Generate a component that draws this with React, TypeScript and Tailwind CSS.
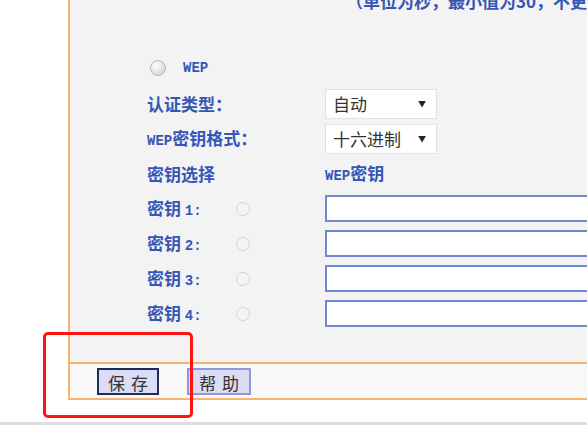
import React from "react";

const cjk = "font-['SimSun','Noto_Sans_CJK_SC',sans-serif]";

const Radio: React.FC<{ checked?: boolean; big?: boolean }> = ({ checked, big }) => (
  <span
    className={`inline-block rounded-full border ${
      big
        ? "w-[16px] h-[16px] border-[#b8b8b8] bg-[radial-gradient(circle_at_35%_35%,#ffffff,#c9c9c9)]"
        : "w-[14px] h-[14px] border-[#d4d4d4] bg-[#f4f4f4]"
    } flex items-center justify-center`}
  >
    {checked && <span className="w-[6px] h-[6px] rounded-full bg-[#9a9a9a]" />}
  </span>
);

const Select: React.FC<{ value: string }> = ({ value }) => (
  <div className="w-[112px] h-[30px] bg-white border border-[#e2e2e2] flex items-center justify-between pl-[7px] pr-[10px] text-[17px] text-[#333]">
    <span>{value}</span>
    <span className="text-[8px] text-[#222]">▼</span>
  </div>
);

const Label: React.FC<{ children: React.ReactNode; w?: string }> = ({ children, w = "w-[178px]" }) => (
  <div className={`${w} shrink-0 text-[17px] font-semibold text-[#3656b6]`}>{children}</div>
);

const mono = "font-['Liberation_Mono',monospace] font-bold text-[14px]";

const keys = ["1", "2", "3", "4"];

export default function App() {
  return (
    <div className={`relative w-[587px] h-[425px] overflow-hidden bg-white ${cjk}`}>
      <div className="flex h-[400px]">
        <div className="w-[68px] shrink-0 bg-white" />
        <div className="flex-1 min-w-0 flex flex-col border-l-2 border-[#f7b46e]">
          <div className="h-[362px] bg-[#f3f3f3] overflow-hidden">
            <div className="-mt-[9px] h-[20px] leading-[20px] pl-[276px] whitespace-nowrap text-[17px] font-semibold text-[#3656b6]">
              （单位为秒，最小值为30，不更改
            </div>
            <div className="mt-[40px] pl-[77px] flex flex-col">
              <div className="h-[35px] flex items-center">
                <span className="ml-[3px]">
                  <Radio big />
                </span>
                <span className={`ml-[17px] text-[#3656b6] ${mono}`}>WEP</span>
              </div>
              <div className="h-[35px] flex items-center">
                <Label>认证类型：</Label>
                <Select value="自动" />
              </div>
              <div className="h-[35px] flex items-center">
                <Label>
                  <span className={mono}>WEP</span>密钥格式：
                </Label>
                <Select value="十六进制" />
              </div>
              <div className="h-[35px] flex items-center">
                <Label>密钥选择</Label>
                <div className="text-[17px] font-semibold text-[#3656b6]">
                  <span className={mono}>WEP</span>密钥
                </div>
              </div>
              {keys.map((k, i) => (
                <div key={k} className="h-[35px] flex items-center">
                  <Label w="w-[89px]">
                    密钥 <span className={mono}>{k}:</span>
                  </Label>
                  <div className="w-[89px] shrink-0">
                    <Radio checked={i === 0} />
                  </div>
                  <div className="w-[300px] h-[27px] shrink-0 bg-white border-2 border-[#7088d2]" />
                </div>
              ))}
            </div>
          </div>
          <div className="h-[38px] border-y-2 border-[#f7b46e] bg-[#f8f8f8] flex items-center pl-[27px] gap-[28px]">
            <button className="w-[62px] h-[27px] bg-[#dcdcf4] border-2 border-[#1d2b58] text-[17px] text-[#333] tracking-[6px] pl-[6px]">
              保存
            </button>
            <button className="w-[64px] h-[27px] bg-[#dcdcf4] border-2 border-[#8c98da] text-[17px] text-[#333] tracking-[6px] pl-[6px]">
              帮助
            </button>
          </div>
        </div>
      </div>
      <div className="h-[22px] bg-white" />
      <div className="h-[3px] bg-[#dedede]" />
      <div className="absolute left-[43px] top-[332px] w-[150px] h-[86px] border-[3px] border-[#ff1414] rounded-[5px]" />
    </div>
  );
}
